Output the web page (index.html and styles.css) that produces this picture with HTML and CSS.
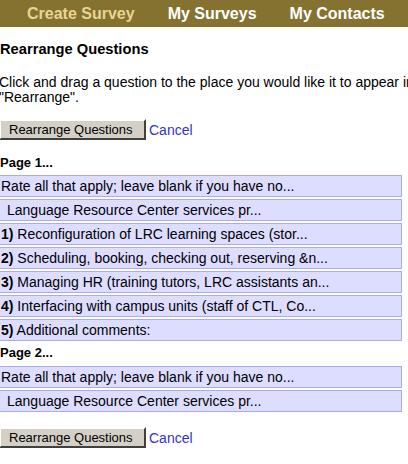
FILE: index.html
```html
<!DOCTYPE html>
<html>
<head>
<meta charset="utf-8">
<link rel="stylesheet" href="styles.css">
</head>
<body>
<nav class="topnav">
  <a class="nav-item active" href="#">Create Survey</a>
  <a class="nav-item" href="#">My Surveys</a>
  <a class="nav-item" href="#">My Contacts</a>
</nav>
<main class="content">
  <h2 class="title">Rearrange Questions</h2>
  <p class="intro">Click and drag a question to the place you would like it to appear in<br>"Rearrange".</p>
  <div class="actions">
    <button class="btn">Rearrange Questions</button>
    <a class="cancel" href="#">Cancel</a>
  </div>
  <div class="page-label">Page 1...</div>
  <ul class="qlist">
    <li class="q">Rate all that apply; leave blank if you have no...</li>
    <li class="q sub">Language Resource Center services pr...</li>
    <li class="q"><b>1)</b> Reconfiguration of LRC learning spaces (stor...</li>
    <li class="q"><b>2)</b> Scheduling, booking, checking out, reserving &amp;n...</li>
    <li class="q"><b>3)</b> Managing HR (training tutors, LRC assistants an...</li>
    <li class="q"><b>4)</b> Interfacing with campus units (staff of CTL, Co...</li>
    <li class="q"><b>5)</b> Additional comments:</li>
  </ul>
  <div class="page-label next">Page 2...</div>
  <ul class="qlist">
    <li class="q">Rate all that apply; leave blank if you have no...</li>
    <li class="q sub">Language Resource Center services pr...</li>
  </ul>
  <div class="actions bottom">
    <button class="btn">Rearrange Questions</button>
    <a class="cancel" href="#">Cancel</a>
  </div>
</main>
</body>
</html>
```

FILE: styles.css
```css
html, body {
  margin: 0;
  padding: 0;
  background: #ffffff;
  overflow: hidden;
}
body {
  font-family: "Liberation Sans", Arial, sans-serif;
  font-size: 14px;
  color: #000;
}
.topnav {
  display: flex;
  align-items: center;
  height: 27px;
  background: #857231;
  padding-left: 27px;
  gap: 33px;
}
.nav-item {
  font-weight: bold;
  font-size: 16px;
  color: #ffffff;
  text-decoration: none;
  white-space: nowrap;
}
.nav-item.active {
  color: #e8d592;
}
.content {
  margin-left: -1px;
  width: 600px;
}
.title {
  font-size: 14.7px;
  font-weight: bold;
  margin: 13px 0 0 1px;
  line-height: 18px;
}
.intro {
  margin: 17px 0 0 0;
  line-height: 15px;
  white-space: nowrap;
}
.actions {
  display: flex;
  align-items: center;
  gap: 3px;
  margin-top: 14px;
}
.actions.bottom {
  margin-top: 15px;
}
.btn {
  box-sizing: border-box;
  font-family: "Liberation Sans", Arial, sans-serif;
  font-size: 13px;
  width: 147px;
  height: 21px;
  padding: 0 0 0 8px;
  background: #d4d0c8;
  border: 2px solid;
  border-color: #ffffff #404040 #404040 #ffffff;
  color: #000;
  margin-left: 0;
  display: flex;
  align-items: center;
}
.cancel {
  color: #3333cc;
  text-decoration: none;
}
.page-label {
  font-weight: bold;
  font-size: 13px;
  line-height: 16px;
  margin: 15px 0 4px 1px;
}
.page-label.next {
  margin: 4px 0 5px 1px;
}
.qlist {
  list-style: none;
  margin: 0;
  padding: 0;
  display: flex;
  flex-direction: column;
  gap: 2px;
}
.q {
  box-sizing: border-box;
  height: 22px;
  width: 405px;
  margin-left: -2px;
  padding-left: 3px;
  background: #ddddff;
  border: 1px solid #aaaaee;
  line-height: 20px;
  white-space: nowrap;
}
.q.sub {
  padding-left: 9px;
}
.q b {
  font-weight: bold;
}
```
